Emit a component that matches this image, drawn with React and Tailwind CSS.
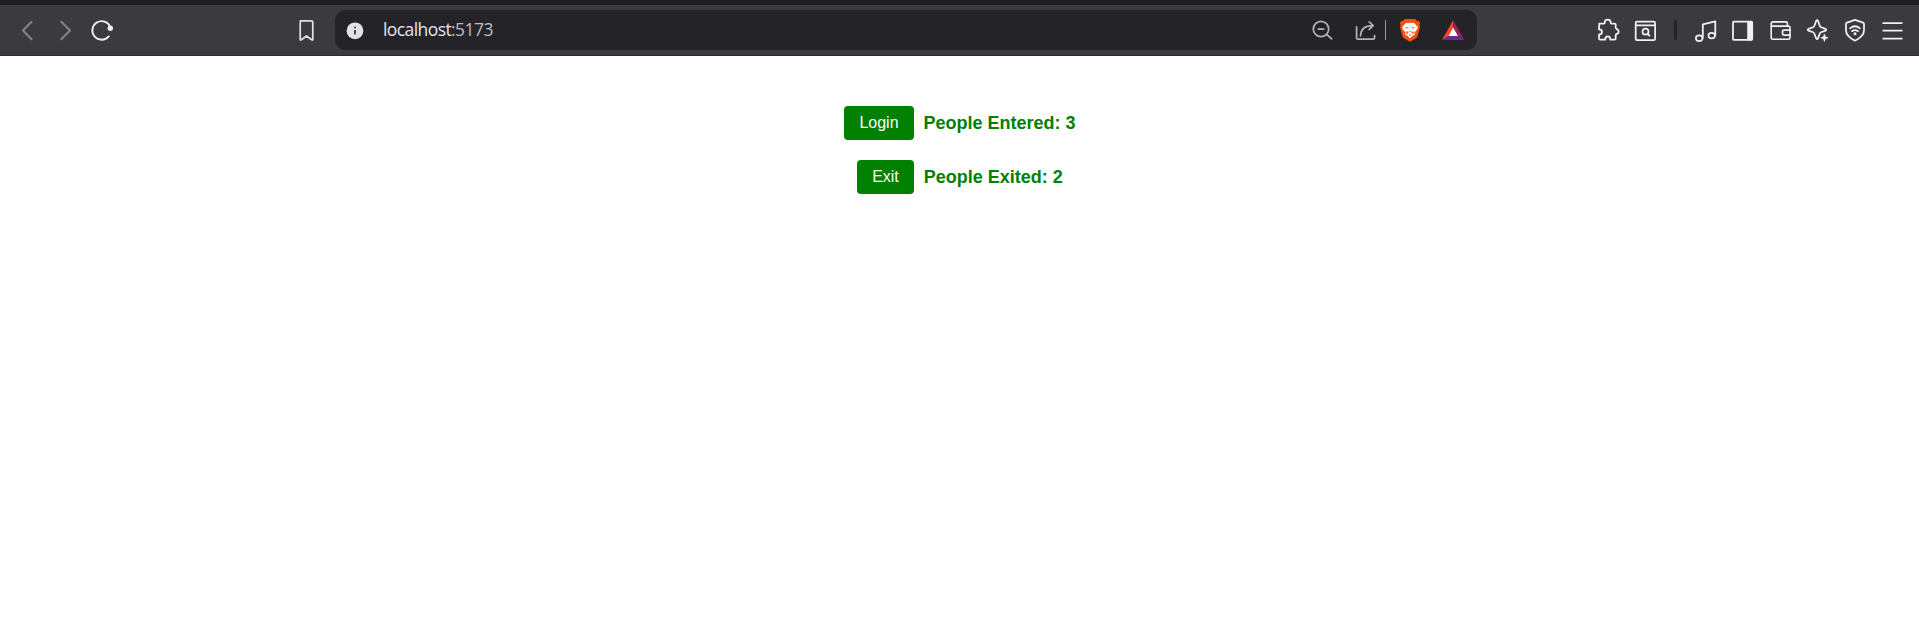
import React, { useState } from 'react';

function Icon({ children, className = '' }) {
  return (
    <svg
      width="24"
      height="24"
      viewBox="0 0 24 24"
      fill="none"
      stroke="currentColor"
      strokeWidth="1.75"
      strokeLinecap="round"
      strokeLinejoin="round"
      className={`block shrink-0 ${className}`}
    >
      {children}
    </svg>
  );
}

function Navigation() {
  return (
    <div className="flex items-center pl-4">
      <Icon className="text-[#85848a]"><path d="M15.6 3.7 7 12.5l8.6 8.8" strokeWidth="2" /></Icon>
      <Icon className="ml-[13px] text-[#85848a]"><path d="M8.3 3.7 17 12.5l-8.7 8.8" strokeWidth="2" /></Icon>
      <Icon className="ml-[13px] text-[#f1f0f6]">
        <path d="M20.3 9A9.3 9.3 0 1 0 18.8 18.4" strokeWidth="1.9" />
        <circle cx="20.3" cy="10.3" r="2.7" fill="currentColor" stroke="none" />
      </Icon>
    </div>
  );
}

function AddressBar() {
  return (
    <div className="ml-[17px] flex h-10 w-[1142px] items-center rounded-[10px] bg-[#242328] pl-2">
      <Icon className="text-[#e3e2e9]">
        <circle cx="12" cy="12.8" r="8.4" fill="currentColor" stroke="none" />
        <path d="M12 12v4.6" stroke="#37363d" strokeWidth="1.8" strokeLinecap="butt" />
        <circle cx="12" cy="9.4" r="1" fill="#37363d" stroke="none" />
      </Icon>
      <div className="ml-4 flex-1 pb-0.5 font-['Open_Sans','Noto_Sans',sans-serif] text-[17.5px] leading-6 tracking-[-0.58px] text-[#e6e5ea]">
        localhost<span className="text-[#bdbcc2]">:5173</span>
      </div>
      <Icon className="text-[#b2b1b7]">
        <circle cx="11" cy="11" r="7.7" />
        <path d="m16.7 16.5 5 4.3M8.3 11h5.4" />
      </Icon>
      <Icon className="ml-[19px] text-[#b2b1b7]">
        <path d="M3.6 8.8v11.1q0 1.2 1.2 1.2h15.5q1.2 0 1.2-1.2v-2.4" />
        <path d="M7.5 17.8C7.8 11 11.7 7.5 19.8 7.5M16.2 3.9l4 3.7-4 3.8" />
      </Icon>
      <div className="ml-2 h-5 w-px bg-[#9a999f]" />
      <svg width="24" height="24" viewBox="0 0 24 24" className="ml-3 block shrink-0">
        <path d="M7 1.1h10l2.2 2 1.4-.2 1.6 2.2-.8 2 .6 2-2.5 9.1q-.4 1.4-1.6 2.1L12 23.7l-5.9-3.4q-1.2-.7-1.6-2.1L2 9.1l.6-2-.8-2 1.6-2.2 1.4.2Z" fill="#ff4e0b" />
        <path d="m8.1 4.7 2 .4L12 4.7l1.9.4 2-.4 3.9 4.2-.7 2.7-2.7 2.8.6 2-2 1L12 20.3l-3-2.9-2-1 .6-2-2.7-2.8-.7-2.7Z" fill="#fff" />
        <path d="m6.8 8.9 3.3.5.4.8-1.6.3ZM17.2 8.9l-3.3.5-.4.8 1.6.3ZM8.3 13.2l2.7.8-1.3 1-.4 1.4-.9-.7ZM15.7 13.2l-2.7.8 1.3 1 .4 1.4.9-.7ZM11 13h2l-1 1.4ZM10.4 17.2l1.6-1 1.6 1-1.6.6Z" fill="#ff4e0b" />
      </svg>
      <svg width="24" height="24" viewBox="0 0 24 24" className="mr-3 ml-[19px] block shrink-0">
        <path d="M12.2 2.2 1 21.9l6.7-3.8 4.5-8.1Z" fill="#ff4724" />
        <path d="M12.2 2.2v7.8l4.5 8.1 6.5 3.8Z" fill="#9e1f63" />
        <path d="m1 21.9 6.7-3.8h9l6.5 3.8Z" fill="#662d91" />
        <path d="m12.2 9.5 4.7 8.5H7.5Z" fill="#fff" />
      </svg>
    </div>
  );
}

function BrowserActions() {
  return (
    <div className="ml-auto flex items-center pr-[14px] text-[#f1f0f6]">
      <Icon>
        <path d="M3.3 5.5h4.6c.7 0 .9-.6.9-1.3C8.8 2.6 10 1.7 11.7 1.7s2.9.9 2.9 2.5c0 .7.2 1.3.9 1.3h3.1q1.1 0 1.1 1.1v3.2c0 .7.4 1 1.1 1.3 1.2.5 1.9 1.2 1.9 2.4s-.7 2-1.9 2.4c-.7.2-1.1.6-1.1 1.3v3.4q0 1.1-1.1 1.1h-4.3c0-2.2-.9-3.4-2.5-3.4s-2.6 1.2-2.6 3.4H4.1q-1.1 0-1.1-1.1v-4.2c2 0 3-.9 3-2.5s-1-2.5-3-2.5Z" />
      </Icon>
      <Icon className="ml-[13px]">
        <rect x="2.7" y="3.7" width="19.4" height="18.3" rx="1.3" />
        <path d="M3 7.3h19" />
        <circle cx="12.5" cy="13.7" r="3" strokeWidth="1.7" />
        <path d="m14.7 15.8 1.7 1.7" strokeWidth="1.8" />
      </Icon>
      <div className="ml-[17px] h-5 w-[3px] rounded-full bg-[#242328]" />
      <Icon className="ml-[17px]">
        <ellipse cx="5.2" cy="20.2" rx="3.3" ry="2.8" />
        <ellipse cx="17.7" cy="17.6" rx="3.3" ry="2.8" />
        <path d="M8.8 19.7V6.4l12.5-3v14" />
      </Icon>
      <Icon className="ml-[13px]">
        <rect x="2" y="3.7" width="19.2" height="18.2" rx="0.8" />
        <path d="M16.2 3.5h4.4q1 0 1 1v16.9q0 1-1 1h-4.4Z" fill="currentColor" stroke="none" />
      </Icon>
      <Icon className="ml-[14px]">
        <path d="M2.2 5.5v14q0 1.7 1.7 1.7h15.4q1.7 0 1.7-1.7v-9.7q0-1.7-1.7-1.7H4.2c-1.3 0-2-.9-2-2.1S3 3.9 4.2 3.9h13.1q1 0 1 1v3" strokeWidth="1.6" />
        <path d="M21 12.2h-6.1q-1.4 0-1.4 1.4v2q0 1.4 1.4 1.4H21" />
      </Icon>
      <Icon className="ml-[13px]">
        <path d="M10.2 2.9c.4-1 1.4-1 1.8 0l1.7 4.8q.4 1.1 1.4 1.5l4.4 1.7c.9.4.9 1.3 0 1.7l-4.4 1.7q-1 .4-1.4 1.5L12 20.4c-.4 1-1.4 1-1.8 0l-1.8-4.6q-.4-1.1-1.4-1.5l-4.5-1.7c-1-.4-1-1.3 0-1.7L7 9.2q1-.4 1.4-1.5Z" />
        <path d="m18.4 16.2 1 2.6 2.7 1-2.7 1-1 2.7-1-2.7-2.6-1 2.6-1Z" fill="currentColor" strokeWidth=".6" />
      </Icon>
      <Icon className="ml-[14px]">
        <path d="m11 1.9 8 2.7q1 .4 1 1.5v6.4c0 4.6-3.8 7.6-9 10.2-5.2-2.6-9-5.6-9-10.2V6.1q0-1.1 1-1.5Z" />
        <path d="M6.1 10.3q4.9-4.1 9.8 0M8 13.2q3-2.2 6 0" />
        <circle cx="11" cy="15.7" r="1.5" fill="currentColor" stroke="none" />
      </Icon>
      <Icon className="ml-[13px]"><path d="M1.5 5h20M1.5 12.5h20M1.5 20.5h20" strokeLinecap="butt" /></Icon>
    </div>
  );
}

function Counter({ action, label, count, onClick }) {
  return (
    <div className="flex h-[34px] items-center justify-center">
      <button
        onClick={onClick}
        className="h-[34px] rounded bg-[#008000] px-[15px] text-base text-white"
      >
        {action}
      </button>
      <span className="ml-[10px] text-[18px] font-bold whitespace-nowrap text-[#008000]">
        {label}: {count}
      </span>
    </div>
  );
}

export default function App() {
  const [entered, setEntered] = useState(3);
  const [exited, setExited] = useState(2);

  return (
    <div className="flex h-screen flex-col bg-white font-['Liberation_Sans',Arial,sans-serif]">
      <header className="flex h-14 shrink-0 items-center border-t-[5px] border-b border-t-[#1f1e25] border-b-[#2b2a2f] bg-[#3b3a3f]">
        <Navigation />
        <Icon className="ml-[180px] text-[#dfdee4]">
          <path d="M6.2 2.8h11q1.6 0 1.6 1.6v16.9q0 1.3-1.1.5L12.5 18l-5.2 3.8q-1.1.8-1.1-.5V4.4q0-1.6 1.6-1.6Z" />
        </Icon>
        <AddressBar />
        <BrowserActions />
      </header>
      <main className="flex flex-col gap-5 pt-[50px] pl-px">
        <Counter action="Login" label="People Entered" count={entered} onClick={() => setEntered(entered + 1)} />
        <Counter action="Exit" label="People Exited" count={exited} onClick={() => setExited(exited + 1)} />
      </main>
    </div>
  );
}
